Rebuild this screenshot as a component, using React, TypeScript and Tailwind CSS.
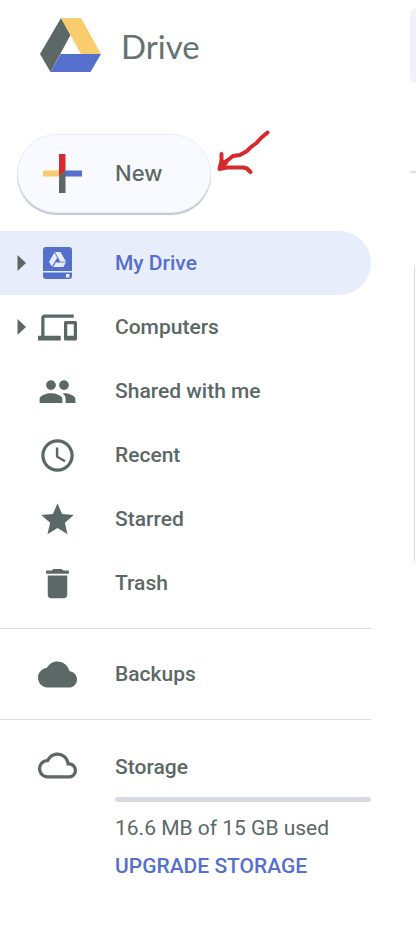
import type { ReactNode } from "react";

function Icon({ d }: { d: string }) {
  return (
    <svg className="size-[39px] shrink-0" viewBox="0 0 24 24" fill="currentColor" aria-hidden="true">
      <path d={d} />
    </svg>
  );
}

const DEVICES =
  "M4 6h18V4H4c-1.100 0-2 .9-2 2v11H0v3h14v-3H4V6zm19 2h-6c-.55 0-1 .45-1 1v10c0 .55.45 1 1 1h6c.55 0 1-.45 1-1V9c0-.55-.45-1-1-1zm-1 9h-4v-7h4v7z";
const PEOPLE =
  "M16 11c1.660 0 2.990-1.340 2.990-3S17.660 5 16 5c-1.660 0-3 1.340-3 3s1.340 3 3 3zm-8 0c1.660 0 2.990-1.340 2.990-3S9.660 5 8 5C6.340 5 5 6.340 5 8s1.340 3 3 3zm0 2c-2.330 0-7 1.170-7 3.500V19h14v-2.500c0-2.330-4.670-3.500-7-3.500zm8 0c-.29 0-.62.02-.97.05 1.160.84 1.970 1.970 1.970 3.450V19h6v-2.500c0-2.330-4.670-3.500-7-3.500z";
const CLOCK =
  "M11.990 2C6.470 2 2 6.480 2 12s4.470 10 9.990 10C17.520 22 22 17.520 22 12S17.520 2 11.990 2zM12 20c-4.420 0-8-3.580-8-8s3.580-8 8-8 8 3.580 8 8-3.580 8-8 8zm.5-13H11v6l5.250 3.150.75-1.230-4.500-2.670z";
const STAR =
  "M12 17.270L18.180 21l-1.640-7.030L22 9.240l-7.190-.61L12 2 9.190 8.630 2 9.240l5.460 4.730L5.820 21z";
const TRASH =
  "M6 19c0 1.100.9 2 2 2h8c1.100 0 2-.9 2-2V7H6v12zM19 4h-3.500l-1-1h-5l-1 1H5v2h14V4z";
const CLOUD =
  "M19.350 10.040C18.670 6.590 15.640 4 12 4 9.110 4 6.600 5.640 5.350 8.040 2.340 8.360 0 10.910 0 14c0 3.310 2.690 6 6 6h13c2.760 0 5-2.240 5-5 0-2.640-2.050-4.780-4.650-4.960z";
const CLOUD_OUTLINE =
  "M19.350 10.040C18.670 6.590 15.640 4 12 4 9.110 4 6.600 5.640 5.350 8.040 2.340 8.360 0 10.910 0 14c0 3.310 2.690 6 6 6h13c2.760 0 5-2.240 5-5 0-2.640-2.050-4.780-4.650-4.960zM19 18H6c-2.210 0-4-1.790-4-4 0-2.050 1.530-3.760 3.560-3.970l1.070-.11.5-.95C8.080 7.140 9.940 6 12 6c2.620 0 4.880 1.860 5.390 4.430l.3 1.500 1.530.11c1.560.1 2.780 1.410 2.780 2.960 0 1.650-1.350 3-3 3z";

function DriveLogo() {
  return (
    <svg className="h-[54px] w-[61px]" viewBox="0 0 61 54" aria-hidden="true">
      <path d="M21 0 30.500 17 10.500 54 0 36z" fill="#5b6866" />
      <path d="M21 0H41L61 36H41z" fill="#f9cc6e" />
      <path d="M20.500 36H61L50.500 54H10.500z" fill="#556fcd" />
    </svg>
  );
}

function PlusIcon() {
  return (
    <svg className="size-[39px]" viewBox="0 0 39 39" aria-hidden="true">
      <path d="M0 16.500H16L19 22.500H0z" fill="#f9cc6e" />
      <path d="M16 0H22.500V16.500L16 22.500z" fill="#d6292d" />
      <path d="M22.500 16.500H39V22.500H17z" fill="#556fcd" />
      <path d="M16 22.500L22.500 16.500V39H16z" fill="#5b6866" />
    </svg>
  );
}

function MyDriveIcon() {
  return (
    <svg className="size-[39px] shrink-0" viewBox="0 0 39 39" aria-hidden="true">
      <path d="M8 3H31Q34 3 34 6V27H5V6Q5 3 8 3zM5 28.500H34V32Q34 35 31 35H8Q5 35 5 32z" fill="#556fcd" />
      <path
        d="M17 8H22.500L28 17.800H22.300zM16.300 8.700 19.200 13.700 14 22.500 11 18zM17.800 18.500H28L25.300 23H15.200z"
        fill="#e8edfb"
      />
      <path d="M28 30h3.500v3.500H28z" fill="#e8edfb" />
    </svg>
  );
}

function NavRow({
  label,
  icon,
  active = false,
  expandable = false,
}: {
  label: string;
  icon: ReactNode;
  active?: boolean;
  expandable?: boolean;
}) {
  return (
    <li
      className={`flex h-16 items-center rounded-r-full ${
        active ? "bg-[#e8edfb] text-[#556fcd]" : "text-[#5b6866]"
      }`}
    >
      <div className="flex w-[38px] shrink-0 pl-[17px]">
        {expandable && (
          <button type="button" aria-label={`Expand ${label}`} className="text-[#5b6866]">
            <svg className="h-4 w-[9px]" viewBox="0 0 9 16" fill="currentColor" aria-hidden="true">
              <path d="M.5 0 9 8 .5 16z" />
            </svg>
          </button>
        )}
      </div>
      <a href="#" className="flex flex-1 items-center gap-[38px] text-[21px] leading-8 font-medium">
        {icon}
        {label}
      </a>
    </li>
  );
}

export default function App() {
  return (
    <div className="flex min-h-screen gap-[39px] overflow-hidden bg-white font-['Roboto','Liberation_Sans',sans-serif]">
      <aside className="w-[371px] shrink-0">
        <header className="flex h-[127px] items-start gap-5 pt-[18px] pl-10">
          <DriveLogo />
          <h1 className="font-['Lato','Liberation_Sans',sans-serif] text-[33px] leading-[56px] text-[#66726f]">
            Drive
          </h1>
        </header>

        <div className="flex h-[104px] items-start pl-[17px]">
          <button
            type="button"
            className="mt-[7px] flex h-[79px] w-[194px] items-center gap-[33px] rounded-full border border-[#e8ecf8] bg-[#f9faff] pl-[25px] font-['Inter','Liberation_Sans',sans-serif] text-[22px] font-medium text-[#5b6866] shadow-[0_2px_1px_#c4c6cc]"
          >
            <PlusIcon />
            New
          </button>
          <svg
            className="h-[52px] w-[64px]"
            viewBox="0 0 64 52"
            fill="none"
            stroke="#d6292d"
            strokeWidth="4"
            strokeLinecap="round"
            strokeLinejoin="round"
            aria-hidden="true"
          >
            <path d="M56.500 5.500 50 11 45.500 16 40 20 36 24 29 28 22 29 17 33 11 37" />
            <path d="M10.500 27 10.500 34 8.500 42 16 40.500 32 40.500 36 41.500 39.500 45" />
            <path d="M10.500 35 15 36 9 41z" fill="#d6292d" />
          </svg>
        </div>

        <nav aria-label="Drive">
          <ul>
            <NavRow label="My Drive" icon={<MyDriveIcon />} active expandable />
            <NavRow label="Computers" icon={<Icon d={DEVICES} />} expandable />
            <NavRow label="Shared with me" icon={<Icon d={PEOPLE} />} />
            <NavRow label="Recent" icon={<Icon d={CLOCK} />} />
            <NavRow label="Starred" icon={<Icon d={STAR} />} />
            <NavRow label="Trash" icon={<Icon d={TRASH} />} />
          </ul>
          <ul className="mt-[13px] border-y border-[#dcdfea] py-[13px]">
            <NavRow label="Backups" icon={<Icon d={CLOUD} />} />
          </ul>
        </nav>

        <section className="flex gap-[38px] pt-[26px] pl-[38px] text-[#5b6866]">
          <Icon d={CLOUD_OUTLINE} />
          <div className="flex-1 text-[21px]">
            <h2 className="pt-[5px] leading-8 font-medium">Storage</h2>
            <div
              role="progressbar"
              aria-label="Storage used"
              aria-valuenow={0}
              className="mt-[14px] h-[5px] rounded-full bg-[#d8dbe4]"
            />
            <p className="mt-[10px] leading-8">16.6 MB of 15 GB used</p>
            <a href="#" className="mt-[6px] block leading-8 font-medium text-[#556fcd]">
              UPGRADE STORAGE
            </a>
          </div>
        </section>
      </aside>

      <main className="min-w-0 flex-1 pt-2">
        <div className="h-[75px] rounded-l-lg bg-[#f0f2f9]" />
        <div className="mt-[88px] border-t-2 border-[#dddfe6]" />
        <div className="mt-[92px] ml-1 h-[298px] rounded-l-lg border-l border-[#d8dceb]" />
      </main>
    </div>
  );
}
